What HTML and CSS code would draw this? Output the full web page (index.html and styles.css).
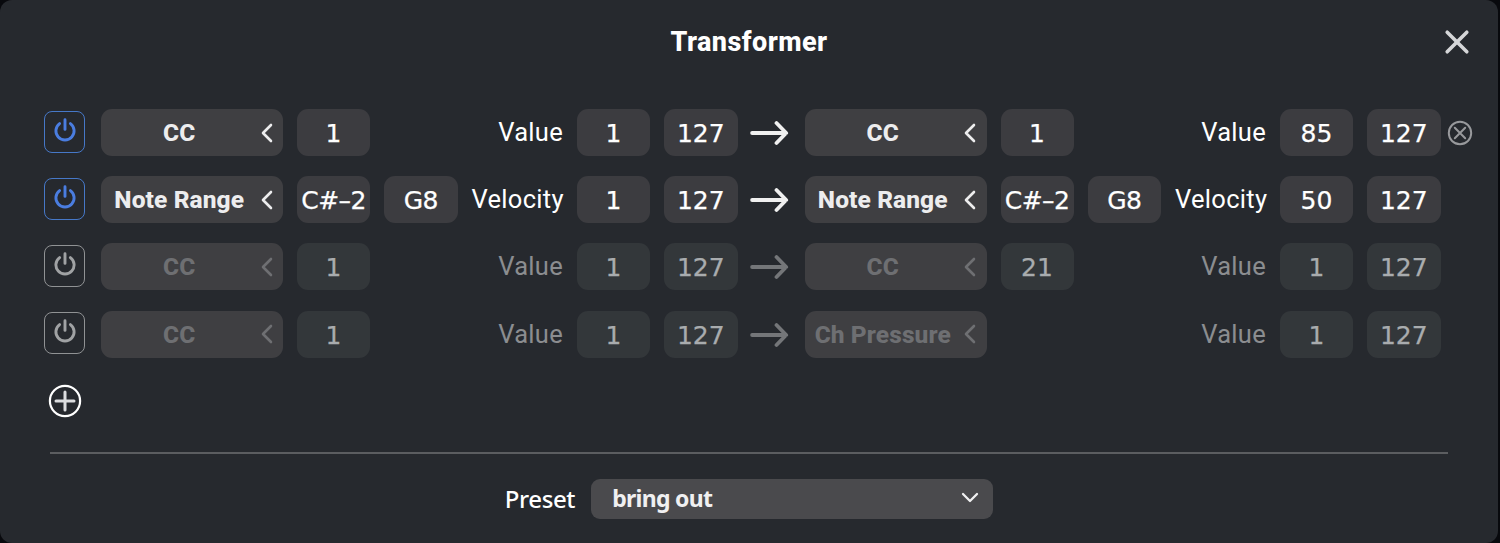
FILE: index.html
```html
<!DOCTYPE html>
<html lang="en">
  <head>
    <meta charset="UTF-8" />
    <meta name="viewport" content="width=device-width, initial-scale=1.0" />
    <title>Transformer</title>
    <link rel="stylesheet" href="styles.css">
  </head>
  <body>
    <!-- Shared icons -->
    <svg class="icon-defs" width="0" height="0">
      <symbol id="icon-power" viewBox="0 0 24 26">
        <path d="M6.6 6.6a9.1 9.1 0 1 0 10.8 0M12 2.8v9.6" />
      </symbol>
      <symbol id="icon-left" viewBox="0 0 12 20">
        <path d="M10 2L2 10l8 8" />
      </symbol>
      <symbol id="icon-arrow" viewBox="0 0 40 26">
        <path d="M2.1 13H36M26.5 3L36.2 13l-9.7 10" />
      </symbol>
    </svg>

    <div class="panel">
      <header class="header">
        <h1>Transformer</h1>
        <button class="close-btn" aria-label="Close">
          <svg width="26" height="26" viewBox="0 0 26 26"><path d="M3.2 3.2l19.6 19.6M22.8 3.2L3.2 22.8" /></svg>
        </button>
      </header>

      <div class="rules">
        <div class="rule">
          <button class="power on"><svg><use href="#icon-power" /></svg></button>
          <button class="type"><span>CC</span><svg><use href="#icon-left" /></svg></button>
          <div class="field">1</div>
          <div></div>
          <div class="label">Value</div>
          <div class="field">1</div>
          <div class="field">127</div>
          <svg class="arrow"><use href="#icon-arrow" /></svg>
          <button class="type"><span>CC</span><svg><use href="#icon-left" /></svg></button>
          <div class="field">1</div>
          <div></div>
          <div class="label">Value</div>
          <div class="field">85</div>
          <div class="field">127</div>
          <button class="delete-btn" aria-label="Delete">
            <svg width="26" height="26" viewBox="0 0 26 26"><circle cx="13" cy="13" r="11.2" /><path d="M7.8 7.8l10.4 10.4M18.2 7.8L7.8 18.2" /></svg>
          </button>
        </div>

        <div class="rule">
          <button class="power on"><svg><use href="#icon-power" /></svg></button>
          <button class="type"><span>Note Range</span><svg><use href="#icon-left" /></svg></button>
          <div class="field note">C#–2</div>
          <div class="field note">G8</div>
          <div class="label">Velocity</div>
          <div class="field">1</div>
          <div class="field">127</div>
          <svg class="arrow"><use href="#icon-arrow" /></svg>
          <button class="type"><span>Note Range</span><svg><use href="#icon-left" /></svg></button>
          <div class="field note">C#–2</div>
          <div class="field note">G8</div>
          <div class="label">Velocity</div>
          <div class="field">50</div>
          <div class="field">127</div>
        </div>

        <div class="rule off">
          <button class="power"><svg><use href="#icon-power" /></svg></button>
          <button class="type"><span>CC</span><svg><use href="#icon-left" /></svg></button>
          <div class="field">1</div>
          <div></div>
          <div class="label">Value</div>
          <div class="field">1</div>
          <div class="field">127</div>
          <svg class="arrow"><use href="#icon-arrow" /></svg>
          <button class="type"><span>CC</span><svg><use href="#icon-left" /></svg></button>
          <div class="field">21</div>
          <div></div>
          <div class="label">Value</div>
          <div class="field">1</div>
          <div class="field">127</div>
        </div>

        <div class="rule off">
          <button class="power"><svg><use href="#icon-power" /></svg></button>
          <button class="type"><span>CC</span><svg><use href="#icon-left" /></svg></button>
          <div class="field">1</div>
          <div></div>
          <div class="label">Value</div>
          <div class="field">1</div>
          <div class="field">127</div>
          <svg class="arrow"><use href="#icon-arrow" /></svg>
          <button class="type"><span>Ch Pressure</span><svg><use href="#icon-left" /></svg></button>
          <div></div>
          <div></div>
          <div class="label">Value</div>
          <div class="field">1</div>
          <div class="field">127</div>
        </div>
      </div>

      <button class="add-btn" aria-label="Add">
        <svg width="34" height="34" viewBox="0 0 34 34"><circle cx="17" cy="17" r="15.1" /><path d="M17 8v18M8 17h18" /></svg>
      </button>

      <footer class="footer">
        <span class="preset-label">Preset</span>
        <button class="preset-select">
          <span>bring out</span>
          <svg width="18" height="11" viewBox="0 0 18 11"><path d="M2 2l7 7 7-7" /></svg>
        </button>
      </footer>
    </div>
  </body>
</html>
```

FILE: styles.css
```css
* {
  margin: 0;
  padding: 0;
  box-sizing: border-box;
}

body {
  background-color: #08090d;
  font-family: Roboto, sans-serif;
  color: #fff;
}

button {
  background: none;
  border: none;
  color: inherit;
  font: inherit;
  cursor: pointer;
}

svg {
  display: block;
  fill: none;
  stroke: currentColor;
  stroke-linecap: round;
  stroke-linejoin: round;
}

.icon-defs {
  position: absolute;
}

.panel {
  width: 1498px;
  height: 543px;
  background-color: #26292e;
  border-radius: 12px;
  overflow: hidden;
}

.header {
  display: grid;
  grid-template-columns: 1fr auto 1fr;
  align-items: center;
  height: 84px;
  padding: 0 28px;
}

.header h1 {
  grid-column: 2;
  font-size: 27px;
  font-weight: 800;
  letter-spacing: 0.45px;
}

.close-btn {
  justify-self: end;
  color: #d5d6d8;
}

.close-btn svg {
  stroke-width: 3.6;
}

.rules {
  display: flex;
  flex-direction: column;
  gap: 20.2px;
  padding: 25px 0 0 44px;
}

.rule {
  display: grid;
  grid-template-columns: 43px 182px 73px 73.5px 91.5px 73px 73.5px 39px 182px 73px 73.5px 91px 73px 73.5px 26px;
  column-gap: 14px;
  align-items: center;
  height: 47px;
}

.power {
  display: flex;
  justify-content: center;
  width: 41px;
  height: 42px;
  margin-top: -2px;
  padding-top: 5px;
  border: 1.5px solid #909294;
  border-radius: 8px;
  color: #a0a2a4;
}

.power.on {
  border-color: #4678c8;
  color: #4a7de0;
}

.power svg {
  width: 24px;
  height: 26px;
  stroke-width: 2.9;
}

.type {
  display: flex;
  align-items: center;
  height: 47px;
  padding-right: 10.5px;
  border-radius: 11px;
  background-color: #3f3f42;
  color: #ededee;
  font-size: 24.5px;
  font-weight: 800;
  letter-spacing: 0.1px;
}

.type span {
  flex: 1;
  margin-right: -7px;
  padding-right: 10px;
  text-align: center;
  white-space: nowrap;
}

.type svg {
  width: 12px;
  height: 20px;
  stroke-width: 2.6;
}

.field {
  height: 47px;
  border-radius: 11px;
  background-color: #3c3c40;
  font-family: "DejaVu Sans", sans-serif;
  font-size: 25px;
  line-height: 49px;
  text-align: center;
  -webkit-text-stroke: 0.25px;
}

.note {
  letter-spacing: -0.6px;
}

.label {
  margin-top: -1px;
  font-size: 25.5px;
  font-weight: 450;
  letter-spacing: 0.3px;
  text-align: right;
  white-space: nowrap;
}

.arrow {
  width: 40px;
  height: 26px;
  margin: 1px 0 0 -2px;
  color: #f0f0f0;
  stroke-width: 3.8;
}

.off .type {
  color: #6e6f72;
}

.off .field {
  background-color: #33373a;
  color: #a9acae;
}

.off .label {
  color: #8b8d90;
}

.off .arrow {
  color: #747679;
}

.delete-btn {
  margin-left: -8px;
  color: #98999c;
}

.delete-btn svg {
  stroke-width: 2;
}

.add-btn {
  display: block;
  margin: 26.5px 0 0 48px;
}

.add-btn svg {
  stroke-width: 2.2;
}

.add-btn path {
  stroke: #dcdddf;
  stroke-width: 3;
}

.footer {
  display: flex;
  justify-content: center;
  align-items: center;
  gap: 16px;
  margin: 33.5px 50px 0;
  padding-top: 25px;
  border-top: 2px solid #5b5d60;
}

.preset-label {
  font-family: "Noto Sans", sans-serif;
  font-size: 24px;
  font-weight: 500;
  letter-spacing: -0.4px;
  line-height: 40px;
}

.preset-select {
  display: flex;
  justify-content: space-between;
  align-items: center;
  width: 402px;
  height: 40px;
  padding: 0 14px 2px 21px;
  border-radius: 9px;
  background-color: #4a4a4d;
  color: #f0f0f1;
  font-family: "Noto Sans", sans-serif;
  font-size: 23px;
  font-weight: 700;
  letter-spacing: -0.7px;
}

.preset-select svg {
  stroke-width: 2.3;
}
```
